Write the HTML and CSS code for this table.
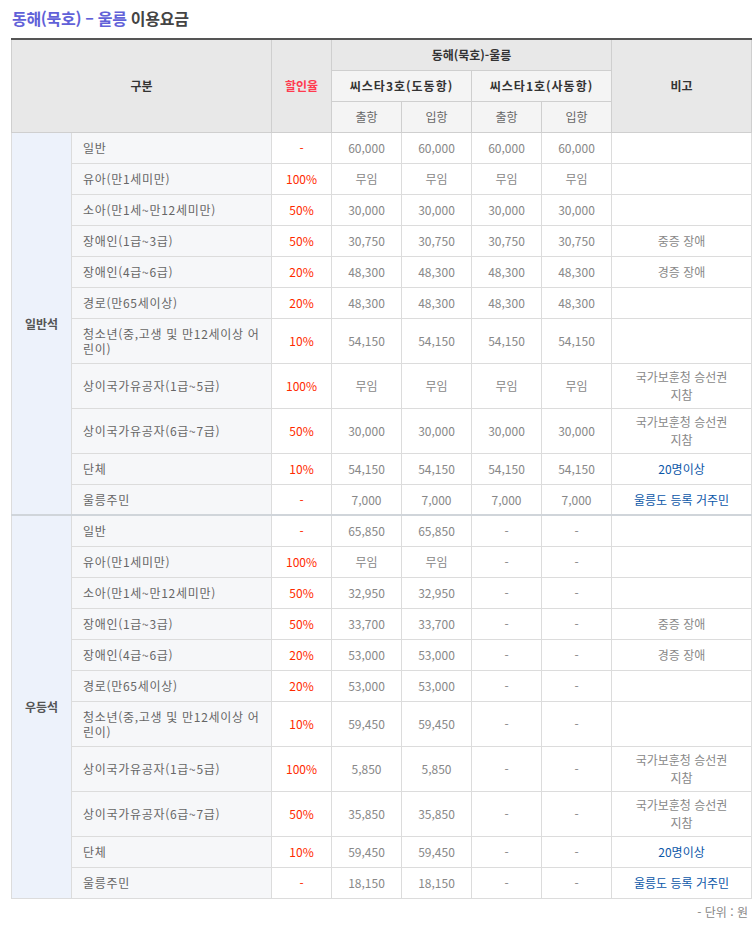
FILE: index.html
```html
<!DOCTYPE html>
<html lang="ko">
<head>
<meta charset="utf-8">
<title>동해(묵호) - 울릉 이용요금</title>
<link rel="stylesheet" href="styles.css">
</head>
<body>
<div class="wrap">
  <h2 class="title"><span class="route">동해(묵호) – 울릉</span> 이용요금</h2>
  <table class="fare">
    <colgroup>
      <col class="c-grp"><col class="c-item"><col class="c-rate">
      <col class="c-num"><col class="c-num"><col class="c-num"><col class="c-num">
      <col class="c-note">
    </colgroup>
    <thead>
      <tr class="h1">
        <th colspan="2" rowspan="3">구분</th>
        <th rowspan="3" class="red-h">할인율</th>
        <th colspan="4">동해(묵호)-울릉</th>
        <th rowspan="3">비고</th>
      </tr>
      <tr class="h2">
        <th colspan="2" class="sub spaced">씨스타3호(도동항)</th>
        <th colspan="2" class="sub spaced">씨스타1호(사동항)</th>
      </tr>
      <tr class="h3">
        <th class="sub light">출항</th><th class="sub light">입항</th>
        <th class="sub light">출항</th><th class="sub light">입항</th>
      </tr>
    </thead>
    <tbody>
      <tr><th rowspan="11" class="grp">일반석</th><td class="item">일반</td><td class="rate">-</td><td>60,000</td><td>60,000</td><td>60,000</td><td>60,000</td><td></td></tr>
      <tr><td class="item">유아(만1세미만)</td><td class="rate">100%</td><td>무임</td><td>무임</td><td>무임</td><td>무임</td><td></td></tr>
      <tr><td class="item">소아(만1세~만12세미만)</td><td class="rate">50%</td><td>30,000</td><td>30,000</td><td>30,000</td><td>30,000</td><td></td></tr>
      <tr><td class="item">장애인(1급~3급)</td><td class="rate">50%</td><td>30,750</td><td>30,750</td><td>30,750</td><td>30,750</td><td class="note">중증 장애</td></tr>
      <tr><td class="item">장애인(4급~6급)</td><td class="rate">20%</td><td>48,300</td><td>48,300</td><td>48,300</td><td>48,300</td><td class="note">경증 장애</td></tr>
      <tr><td class="item">경로(만65세이상)</td><td class="rate">20%</td><td>48,300</td><td>48,300</td><td>48,300</td><td>48,300</td><td></td></tr>
      <tr><td class="item">청소년(중,고생 및 만12세이상 어린이)</td><td class="rate">10%</td><td>54,150</td><td>54,150</td><td>54,150</td><td>54,150</td><td></td></tr>
      <tr><td class="item">상이국가유공자(1급~5급)</td><td class="rate">100%</td><td>무임</td><td>무임</td><td>무임</td><td>무임</td><td class="note two"><span class="ln">국가보훈청 승선권</span><span class="ln">지참</span></td></tr>
      <tr><td class="item">상이국가유공자(6급~7급)</td><td class="rate">50%</td><td>30,000</td><td>30,000</td><td>30,000</td><td>30,000</td><td class="note two"><span class="ln">국가보훈청 승선권</span><span class="ln">지참</span></td></tr>
      <tr><td class="item">단체</td><td class="rate">10%</td><td>54,150</td><td>54,150</td><td>54,150</td><td>54,150</td><td class="note blue">20명이상</td></tr>
      <tr><td class="item">울릉주민</td><td class="rate">-</td><td>7,000</td><td>7,000</td><td>7,000</td><td>7,000</td><td class="note blue">울릉도 등록 거주민</td></tr>
    </tbody>
    <tbody class="second">
      <tr><th rowspan="11" class="grp">우등석</th><td class="item">일반</td><td class="rate">-</td><td>65,850</td><td>65,850</td><td>-</td><td>-</td><td></td></tr>
      <tr><td class="item">유아(만1세미만)</td><td class="rate">100%</td><td>무임</td><td>무임</td><td>-</td><td>-</td><td></td></tr>
      <tr><td class="item">소아(만1세~만12세미만)</td><td class="rate">50%</td><td>32,950</td><td>32,950</td><td>-</td><td>-</td><td></td></tr>
      <tr><td class="item">장애인(1급~3급)</td><td class="rate">50%</td><td>33,700</td><td>33,700</td><td>-</td><td>-</td><td class="note">중증 장애</td></tr>
      <tr><td class="item">장애인(4급~6급)</td><td class="rate">20%</td><td>53,000</td><td>53,000</td><td>-</td><td>-</td><td class="note">경증 장애</td></tr>
      <tr><td class="item">경로(만65세이상)</td><td class="rate">20%</td><td>53,000</td><td>53,000</td><td>-</td><td>-</td><td></td></tr>
      <tr><td class="item">청소년(중,고생 및 만12세이상 어린이)</td><td class="rate">10%</td><td>59,450</td><td>59,450</td><td>-</td><td>-</td><td></td></tr>
      <tr><td class="item">상이국가유공자(1급~5급)</td><td class="rate">100%</td><td>5,850</td><td>5,850</td><td>-</td><td>-</td><td class="note two"><span class="ln">국가보훈청 승선권</span><span class="ln">지참</span></td></tr>
      <tr><td class="item">상이국가유공자(6급~7급)</td><td class="rate">50%</td><td>35,850</td><td>35,850</td><td>-</td><td>-</td><td class="note two"><span class="ln">국가보훈청 승선권</span><span class="ln">지참</span></td></tr>
      <tr><td class="item">단체</td><td class="rate">10%</td><td>59,450</td><td>59,450</td><td>-</td><td>-</td><td class="note blue">20명이상</td></tr>
      <tr><td class="item">울릉주민</td><td class="rate">-</td><td>18,150</td><td>18,150</td><td>-</td><td>-</td><td class="note blue">울릉도 등록 거주민</td></tr>
    </tbody>
  </table>
  <p class="unit">- 단위 : 원</p>
</div>
</body>
</html>
```
FILE: styles.css
```css
html, body {
  margin: 0;
  padding: 0;
  background: #fff;
}
body {
  font-family: "Noto Sans CJK KR", "Noto Sans", sans-serif;
  font-size: 12px;
  color: #777;
}
.wrap {
  width: 740px;
  padding: 0 0 0 11px;
}
.title {
  margin: 0;
  padding: 7px 0 0 1px;
  height: 38px;
  box-sizing: border-box;
  font-size: 16px;
  line-height: 22px;
  font-weight: bold;
  color: #444;
  letter-spacing: -0.3px;
}
.route {
  color: #6161d8;
}
.fare {
  width: 740px;
  border-collapse: collapse;
  table-layout: fixed;
  border-top: 2px solid #555;
}
.c-grp { width: 60px; }
.c-item { width: 200px; }
.c-rate { width: 60px; }
.c-num { width: 70px; }
.c-note { width: 140px; }
.fare th, .fare td {
  border: 1px solid #dcdcdc;
  text-align: center;
  vertical-align: middle;
  padding: 7px 6px;
  line-height: 15px;
}
.fare thead th {
  background: #e8e8e8;
  color: #333;
  font-weight: bold;
  border-color: #cfcfcf;
  padding: 0 4px;
}
.fare thead tr.h1 { height: 31px; }
.fare thead tr.h2 { height: 31px; }
.fare thead tr.h3 { height: 31px; }
.fare thead th.sub {
  background: #f4f4f4;
}
.fare thead th.light {
  font-weight: normal;
  color: #666;
}
.fare thead th.spaced {
  letter-spacing: 1px;
}
.fare thead th.red-h {
  color: #ff3a4f;
}
.fare tbody tr { height: 31px; }
.fare tbody td {
  color: #888;
}
.fare .grp {
  background: #edf2fb;
  color: #555;
  font-weight: bold;
  border-color: #dcdcdc;
}
.fare td.item {
  background: #f6f7f9;
  text-align: left;
  padding-left: 11px;
  padding-right: 8px;
  color: #666;
  letter-spacing: 0.7px;
}
.fare td.rate {
  color: #ff2a00;
}
.fare td.note {
  color: #888;
}
.fare td.note.two {
  padding-top: 4px;
  padding-bottom: 4px;
}
.fare td.note .ln {
  display: block;
  line-height: 18px;
}
.fare td.blue {
  color: #0b57a8;
}
.fare tbody.second tr:first-child th,
.fare tbody.second tr:first-child td {
  border-top: 2px solid #d0d5da;
}
.unit {
  margin: 5px 0 0;
  text-align: right;
  color: #888;
  font-size: 12px;
  line-height: 15px;
  padding-right: 3px;
}
```
